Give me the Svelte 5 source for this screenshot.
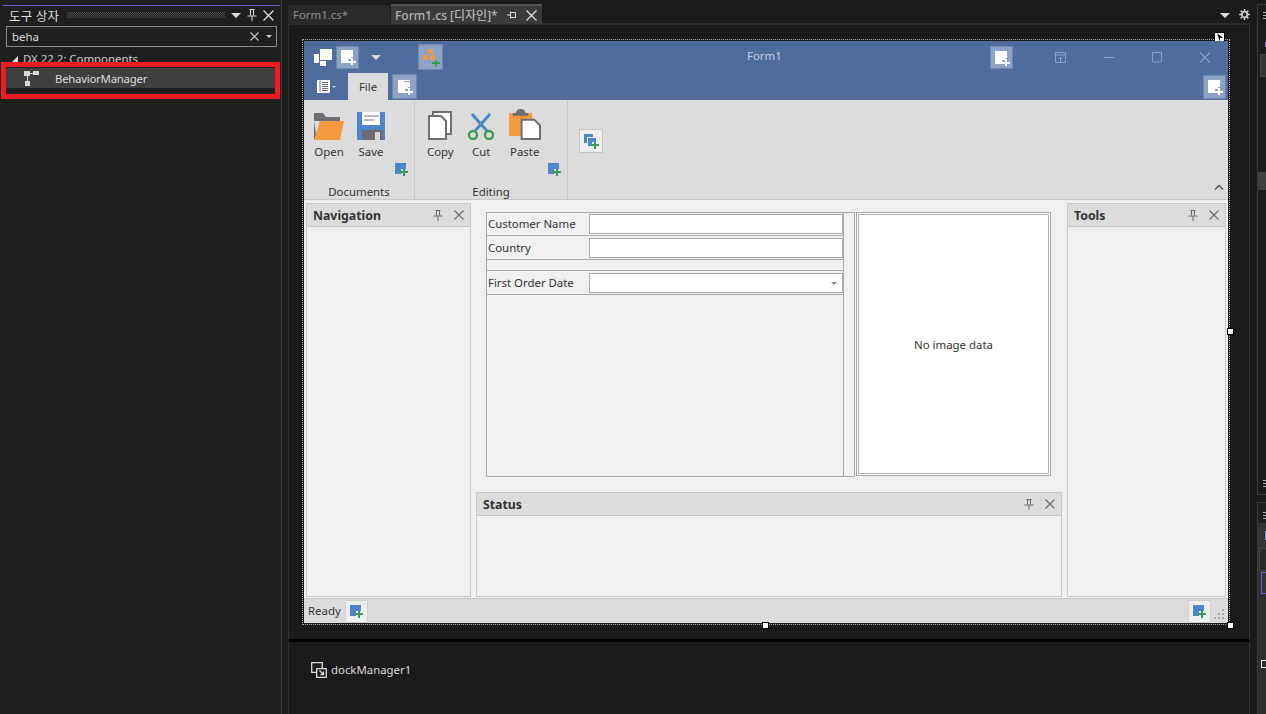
<script lang="ts">
	const groups = [
		{ label: "Documents", width: 111, items: ["Open", "Save"] },
		{ label: "Editing", width: 153, items: ["Copy", "Cut", "Paste"] }
	];
	const rows = [
		{ label: "Customer Name", combo: false },
		{ label: "Country", combo: false },
		{ gap: true },
		{ label: "First Order Date", combo: true }
	];
</script>

{#snippet addWhite()}
	<svg width="16" height="16" viewBox="0 0 16 16"><path d="M1 1H13V8H11V10H8V14H1Z" fill="#fff"/><path d="M11 9h2v3h3v2h-3v2h-2v-2H8v-2h3Z" fill="#fff"/></svg>
{/snippet}
{#snippet addTab()}
	<svg width="16" height="16" viewBox="0 0 16 16"><path d="M1 1H7V3H13V8H11V10H8V14H1Z" fill="#fff"/><path d="M7 1h6v1H7Z" fill="#fff"/><path d="M11 9h2v3h3v2h-3v2h-2v-2H8v-2h3Z" fill="#fff"/></svg>
{/snippet}
{#snippet addBlue()}
	<svg width="13" height="13" viewBox="0 0 13 13"><path d="M0 0H11V6H6V11H0Z" fill="#4d87c9"/><path d="M8 6h2v2h3v2h-3v3H8v-3H5V8h3Z" fill="#3a9a52"/></svg>
{/snippet}
{#snippet pin()}
	<svg width="10" height="11" viewBox="0 0 10 11" fill="none" stroke="#6a6a6a"><path d="M2.500.5h5M3.500.5v5M6.500.5v5M.5 6h9M5 6v5"/></svg>
{/snippet}
{#snippet cross()}
	<svg width="10" height="10" viewBox="0 0 10 10" fill="none" stroke="#6a6a6a" stroke-width="1.100"><path d="M.5.5l9 9M9.500.5l-9 9"/></svg>
{/snippet}
{#snippet ribbonIcon(name)}
	{#if name === "Open"}
		<svg width="30" height="27" viewBox="0 0 30 27"><path d="M0 0H9L12 4H26V8H0Z" fill="#6d6d73"/><path d="M0 8V27H3Z" fill="#6d6d73"/><path d="M6 8H30L26 27H0Z" fill="#f39a3e"/></svg>
	{:else if name === "Save"}
		<svg width="28" height="28" viewBox="0 0 28 28"><path d="M0 0H28V28H0Z" fill="#4d87c9"/><path d="M5 0H23V13H5Z" fill="#fff"/><path d="M7 3H22V5H7ZM7 7H17V9H7Z" fill="#b9b9b9"/><path d="M5 18H26V28H5Z" fill="#6d6d73"/><path d="M18 20H23V28H18Z" fill="#d4d4d4"/></svg>
	{:else if name === "Copy"}
		<svg width="24" height="29" viewBox="0 0 24 29"><path d="M5 1H23V23H5Z" fill="#fff" stroke="#6d6d73" stroke-width="2"/><path d="M1 5H13L18 10V28H1Z" fill="#fff" stroke="#6d6d73" stroke-width="2"/></svg>
	{:else if name === "Cut"}
		<svg width="28" height="27" viewBox="0 0 28 27" fill="none"><path d="M5 1L20 18M23 1L8 18" stroke="#4d87c9" stroke-width="3"/><circle cx="6" cy="22" r="4" stroke="#3a9a52" stroke-width="2.300"/><circle cx="22" cy="22" r="4" stroke="#3a9a52" stroke-width="2.300"/></svg>
	{:else}
		<svg width="32" height="31" viewBox="0 0 33 32"><path d="M0 4H24V28H0Z" fill="#f39a3e"/><path d="M7 4C8 1 9 0 12 0S16 1 17 4H20V7H4V4Z" fill="#6d6d73"/><path d="M13 11H26L32 17V31H13Z" fill="#fff" stroke="#6d6d73" stroke-width="2"/></svg>
	{/if}
{/snippet}
{#snippet dockHeader(title)}
	<div class="dock-head">
		<span>{title}</span>
		<i class="pin">{@render pin()}</i>
		{@render cross()}
	</div>
{/snippet}

<div class="ide">
	<aside class="toolbox">
		<div class="tb-head">
			<span class="tb-title">도구 상자</span>
			<span class="grip"></span>
			<span class="tri light"></span>
			<svg width="10" height="12" viewBox="0 0 10 12" fill="none" stroke="#ddd"><path d="M2.500.5h5M3.500.5v6M6.500.5v6M.5 7h9M5 7v5"/></svg>
			<svg width="11" height="11" viewBox="0 0 11 11" fill="none" stroke="#ddd" stroke-width="1.300"><path d="M.5.5l10 10M10.500.5l-10 10"/></svg>
		</div>
		<div class="tb-search">
			<span>beha</span>
			<svg width="9" height="9" viewBox="0 0 9 9" fill="none" stroke="#ccc" stroke-width="1.200"><path d="M.5.5l8 8M8.500.5l-8 8"/></svg>
			<span class="tri small"></span>
		</div>
		<div class="tb-group"><span class="corner"></span>DX 22.2: Components</div>
		<div class="tb-item">
			<svg width="15" height="15" viewBox="0 0 15 15"><path d="M0 0H6V5H0ZM9 0H15V4H9ZM1 10H6V15H1Z" fill="#d8d8d8"/><path d="M6 2H9V3H6ZM3 5H4V10H3Z" fill="#d8d8d8"/></svg>
			<span>BehaviorManager</span>
		</div>
		<div class="highlight"></div>
	</aside>

	<main class="doc">
		<div class="tabs">
			<div class="tab">Form1.cs*</div>
			<div class="tab active">
				<span>Form1.cs [디자인]*</span>
				<svg width="10" height="9" viewBox="0 0 10 9" fill="none" stroke="#ddd"><path d="M3.500 1.500h5v5h-5zM3.500.5v7M0 4h3"/></svg>
				<svg width="11" height="11" viewBox="0 0 11 11" fill="none" stroke="#ddd" stroke-width="1.300"><path d="M.5.5l10 10M10.500.5l-10 10"/></svg>
			</div>
			<span class="tab-fill"></span>
			<span class="tri light"></span>
			<svg class="gear" width="11" height="11" viewBox="0 0 11 11" fill="none" stroke="#ccc"><circle cx="5.500" cy="5.500" r="2.800" stroke-width="1.800"/><path d="M5.500 0v11M0 5.500h11M1.600 1.600l7.800 7.800M9.400 1.600l-7.800 7.800" stroke-width="1.500" stroke-dasharray="2 7 2"/></svg>
		</div>

		<div class="canvas">
			<div class="selection">
				<span class="handle h-tag"><svg width="9" height="9" viewBox="0 0 9 9"><path d="M2 0L8 5H5V9Z" fill="#000"/></svg></span>
				<span class="handle h-right"></span>
				<span class="handle h-bottom"></span>
				<span class="handle h-corner"></span>

				<div class="form">
					<div class="titlebar">
						<svg class="qa-logo" width="18" height="17" viewBox="0 0 18 17"><path d="M6 0H18V11H6ZM0 5H5V14H0ZM6 12H12V17H6Z" fill="#fff"/></svg>
						<button class="add qa-add">{@render addWhite()}</button>
						<span class="tri light qa-drop"></span>
						<button class="add qa-org">
							<svg width="18" height="19" viewBox="0 0 18 19"><path d="M6 1h5v5H6ZM1 7h5v5H1ZM8 7h5v5H8Z" fill="#f39a3e"/><path d="M13 12h2v2h3v2h-3v3h-2v-3h-3v-2h3Z" fill="#3a9a52"/></svg>
						</button>
						<span class="form-title">Form1</span>
						<button class="add title-add">{@render addWhite()}</button>
						<div class="winbtns">
							<svg width="12" height="11" viewBox="0 0 12 11" fill="none" stroke="#8da2c5"><path d="M.5.5h10v10H.5zM.5 3h10M5.500 10V5M3.500 7l2-2 2 2"/></svg>
							<svg width="12" height="11" viewBox="0 0 12 11" fill="none" stroke="#8da2c5"><path d="M1 5.500h10"/></svg>
							<svg width="12" height="11" viewBox="0 0 12 11" fill="none" stroke="#8da2c5"><path d="M1.500.5h9v9.500h-9z"/></svg>
							<svg width="12" height="11" viewBox="0 0 12 11" fill="none" stroke="#8da2c5" stroke-width="1.100"><path d="M1 .5l10 10M11 .5l-10 10"/></svg>
						</div>
					</div>

					<div class="tabrow">
						<span class="menu-btn">
							<svg width="13" height="13" viewBox="0 0 13 13"><path d="M0 0H13V13H0Z" fill="#fff"/><path d="M3 1V12" stroke="#6d6d73"/><path d="M5 2.500h6M5 4.500h6M5 6.500h6M5 8.500h6M5 10.500h6" stroke="#6d6d73"/></svg>
							<span class="tiny-tri"></span>
						</span>
						<span class="file-tab">File</span>
						<button class="add tab-add">{@render addTab()}</button>
						<span class="tab-fill"></span>
						<button class="add end-add">{@render addWhite()}</button>
					</div>

					<div class="ribbon">
						{#each groups as group}
							<section class="rb-group" style={`width:${group.width}px`}>
								<div class="rb-items">
									{#each group.items as item}
										<div class="rb-item">
											<span class="rb-icon">{@render ribbonIcon(item)}</span>
											<span>{item}</span>
										</div>
									{/each}
									<span class="rb-mini">{@render addBlue()}</span>
								</div>
								<div class="rb-label">{group.label}</div>
							</section>
						{/each}
						<button class="rb-loose">
							<svg width="15" height="15" viewBox="0 0 15 15"><path d="M0 0H9V3H3V9H0Z" fill="#4d87c9"/><path d="M4 4H12V8H8V12H4Z" fill="#4d87c9"/><path d="M10 8h2v2h3v2h-3v3h-2v-3H7v-2h3Z" fill="#3a9a52"/></svg>
						</button>
						<svg class="rb-collapse" width="10" height="6" viewBox="0 0 10 6" fill="none" stroke="#555" stroke-width="1.500"><path d="M1 5.500L5 1.500l4 4"/></svg>
					</div>

					<div class="body">
						<div class="dock nav">{@render dockHeader("Navigation")}</div>

						<div class="center">
							<div class="layout-area">
								<div class="layout">
									{#each rows as row}
										{#if row.gap}
											<div class="lc-gap"></div>
										{:else}
											<div class="lc-row">
												<label>{row.label}</label>
												<div class="edit">
													{#if row.combo}<span class="tiny-tri gray"></span>{/if}
												</div>
											</div>
										{/if}
									{/each}
								</div>
								<div class="splitter"></div>
								<div class="picture"><div>No image data</div></div>
							</div>
							<div class="dock status">{@render dockHeader("Status")}</div>
						</div>

						<div class="dock tools">{@render dockHeader("Tools")}</div>
					</div>

					<div class="statusbar">
						<span class="ready">Ready</span>
						<span class="sb-add">{@render addBlue()}</span>
						<span class="tab-fill"></span>
						<span class="sb-add">{@render addBlue()}</span>
						<svg class="resize" width="11" height="11" viewBox="0 0 11 11" fill="#aaa"><path d="M9 0h2v2H9zM5 4h2v2H5zM9 4h2v2H9zM1 8h2v2H1zM5 8h2v2H5zM9 8h2v2H9z"/></svg>
					</div>
				</div>
			</div>
		</div>

		<div class="tray">
			<svg width="16" height="16" viewBox="0 0 16 16" fill="none" stroke="#ddd" stroke-width="1.300"><path d="M.7.7h10.600v9.600H.7z"/><path d="M5.700 6.700h9.600v8.600H5.700z" fill="#1b1b1b"/><path d="M8.500 8.500l4 4M9.500 12.500h3v-3"/></svg>
			<span>dockManager1</span>
		</div>
	</main>

	<div class="side">
		<div class="side-top">
			<span class="sd-lines t1"></span>
			<span class="sd-purple"></span>
			<span class="sd-box"></span>
			<span class="sd-thumb"></span>
			<span class="sd-lines t2"></span>
		</div>
		<div class="side-bottom">
			<span class="sd-lines t3"></span>
			<span class="sd-blue"></span>
			<span class="sd-box b2"></span>
			<span class="sd-pbox"></span>
			<span class="sd-plus"></span>
		</div>
	</div>
</div>

<style>
	:global(body) {
		margin: 0;
		background: #1b1b1b;
	}
	.ide {
		position: relative;
		display: flex;
		width: 1266px;
		height: 714px;
		overflow: hidden;
		font: 11.400px "Noto Sans", "Noto Sans CJK KR", sans-serif;
		color: #ddd;
	}
	button {
		padding: 0;
		font: inherit;
	}
	svg {
		display: block;
		flex: none;
	}
	.tab-fill {
		flex: 1;
	}
	.tri {
		display: block;
		width: 0;
		height: 0;
		border: 5px solid transparent;
		border-bottom: 0;
		border-top-color: #aaa;
	}
	.tri.light {
		border-top-color: #ddd;
	}
	.tri.small {
		border-width: 3px 3px 0;
		border-top-color: #ccc;
	}
	.tiny-tri {
		display: block;
		width: 0;
		height: 0;
		border: 2px solid transparent;
		border-bottom: 0;
		border-top-color: #c5d0e0;
	}
	.tiny-tri.gray {
		border-width: 3px 3px 0;
		border-top-color: #888;
	}

	/* toolbox */
	.toolbox {
		position: relative;
		box-sizing: border-box;
		width: 282px;
		flex: none;
		padding: 5px 1px 0 3px;
		background: #1f1f1f;
		border-right: 1px solid #333;
	}
	.tb-head {
		display: flex;
		align-items: center;
		gap: 6px;
		height: 18px;
		padding: 0 6px 0 6px;
		border-top: 1px solid #6a5fd0;
	}
	.tb-title {
		font-size: 12.500px;
		letter-spacing: 0.2px;
	}
	.grip {
		flex: 1;
		height: 6px;
		margin-left: 2px;
		background: conic-gradient(#4c4c4c 25%, transparent 0 50%, #4c4c4c 0 75%, transparent 0) 0 0 / 2px 2px;
	}
	.tb-search {
		display: flex;
		align-items: center;
		gap: 7px;
		height: 19px;
		margin: 2px 3px 0 3px;
		padding: 0 4px 0 5px;
		border: 1px solid #8a8a8a;
	}
	.tb-search span:first-child {
		flex: 1;
	}
	.tb-group {
		display: flex;
		align-items: center;
		height: 19px;
		margin-top: 2px;
		padding-left: 9px;
		color: #ccc;
	}
	.corner {
		width: 0;
		height: 0;
		margin-right: 5px;
		border-left: 6px solid transparent;
		border-bottom: 6px solid #ddd;
	}
	.tb-item {
		display: flex;
		align-items: center;
		gap: 16px;
		height: 20px;
		margin: 0 3px 0 3px;
		padding-left: 18px;
		background: #3f3f3f;
		letter-spacing: -0.25px;
	}
	.highlight {
		position: absolute;
		left: 1px;
		top: 62px;
		box-sizing: border-box;
		width: 279px;
		height: 37px;
		border: 5px solid #ed1c24;
	}

	/* document */
	.doc {
		display: flex;
		flex-direction: column;
		box-sizing: border-box;
		width: 969px;
		flex: none;
		margin-left: 6px;
	}
	.tabs {
		display: flex;
		align-items: flex-start;
		flex: none;
		box-sizing: border-box;
		height: 25px;
		margin-right: 7px;
		border-bottom: 2px solid #2d2d2d;
	}
	.tabs .tri {
		margin: 13px 9px 0 0;
	}
	.gear {
		margin-top: 9px;
	}
	.tab {
		display: flex;
		align-items: center;
		box-sizing: border-box;
		width: 102px;
		height: 19px;
		margin: 5px 1px 0 0;
		padding-left: 5px;
		background: #2a2a2a;
		color: #8f8f8f;
	}
	.tab.active {
		gap: 9px;
		width: 151px;
		height: 20px;
		margin-top: 4px;
		padding-left: 4px;
		border-top: 2px solid #555;
		background: #3a3a3a;
		color: #b4b4b4;
		font-size: 12px;
		font-weight: 500;
	}
	.canvas {
		flex: none;
		box-sizing: border-box;
		height: 617px;
		margin-right: 7px;
		padding: 14px 0 0 13px;
		border-left: 1px solid #333;
		border-right: 1px solid #333;
		border-bottom: 3px solid #000;
	}
	.selection {
		position: relative;
		box-sizing: border-box;
		width: 928px;
		height: 586px;
		padding: 1px;
		border: 1px dotted #aaa;
	}
	.handle {
		position: absolute;
		box-sizing: border-box;
		width: 7px;
		height: 7px;
		background: #fff;
		border: 1px solid #000;
	}
	.h-tag {
		display: grid;
		place-items: center;
		left: 911px;
		top: -8px;
		width: 11px;
		height: 11px;
	}
	.h-right {
		right: -5px;
		top: 288px;
	}
	.h-bottom {
		left: 459px;
		bottom: -5px;
	}
	.h-corner {
		right: -5px;
		bottom: -5px;
	}
	.form {
		display: flex;
		flex-direction: column;
		height: 100%;
		background: #f0f0f0;
		color: #333;
	}
	.add {
		display: grid;
		place-items: center;
		box-sizing: border-box;
		width: 23px;
		height: 23px;
		flex: none;
		background: #8da2c5;
		border: 1px solid #6f87b0;
	}
	.titlebar {
		position: relative;
		display: flex;
		align-items: center;
		flex: none;
		height: 32px;
		padding-left: 10px;
		background: #4e6c9c;
	}
	.qa-add {
		margin-left: 4px;
	}
	.qa-drop {
		margin-left: 12px;
	}
	.qa-org {
		width: 25px;
		height: 26px;
		margin-left: 37px;
	}
	.form-title {
		position: absolute;
		left: 443px;
		top: 7px;
		color: #c3cfe2;
	}
	.title-add {
		position: absolute;
		left: 686px;
		top: 5px;
	}
	.winbtns {
		position: absolute;
		right: 17px;
		top: 11px;
		display: flex;
		gap: 36px;
	}
	.tabrow {
		display: flex;
		align-items: stretch;
		flex: none;
		height: 27px;
		background: #4e6c9c;
	}
	.menu-btn {
		display: flex;
		align-items: center;
		gap: 2px;
		width: 44px;
		padding-left: 13px;
		box-sizing: border-box;
	}
	.file-tab {
		display: grid;
		place-items: center;
		width: 40px;
		background: #dcdcdc;
	}
	.tab-add {
		align-self: center;
		width: 25px;
		height: 25px;
		margin-left: 4px;
	}
	.end-add {
		align-self: center;
		height: 24px;
		margin-right: 2px;
	}
	.ribbon {
		position: relative;
		display: flex;
		flex: none;
		height: 100px;
		background: #dcdcdc;
		border-bottom: 1px solid #c8c8c8;
		box-sizing: border-box;
	}
	.rb-group {
		display: flex;
		flex-direction: column;
		box-sizing: border-box;
		padding: 8px 0 0 10px;
		border-right: 1px solid #c8c8c8;
	}
	.rb-group + .rb-group {
		padding-left: 12px;
	}
	.rb-items {
		position: relative;
		display: flex;
		gap: 13px;
		flex: 1;
	}
	.rb-group + .rb-group .rb-items {
		gap: 13.500px;
	}
	.rb-item {
		display: flex;
		flex-direction: column;
		align-items: center;
		line-height: 16px;
	}
	.rb-icon {
		display: flex;
		align-items: flex-end;
		height: 32px;
		margin-bottom: 4px;
	}
	.rb-mini {
		position: absolute;
		right: 6px;
		top: 55px;
	}
	.rb-label {
		height: 15px;
		margin-left: -10px;
		text-align: center;
	}
	.rb-group + .rb-group .rb-label {
		margin-left: -12px;
	}
	.rb-loose {
		display: grid;
		place-items: center;
		box-sizing: border-box;
		width: 24px;
		height: 24px;
		margin: 29px 0 0 11px;
		background: #eee;
		border: 1px solid #c4c4c4;
	}
	.rb-collapse {
		position: absolute;
		right: 4px;
		bottom: 9px;
	}
	.body {
		display: flex;
		flex: 1;
		gap: 5px;
		min-height: 0;
		padding: 3px 2px 1px;
		background: #f0f0f0;
	}
	.dock {
		box-sizing: border-box;
		border: 1px solid #c8c8c8;
	}
	.dock-head {
		display: flex;
		align-items: center;
		box-sizing: border-box;
		height: 23px;
		padding: 0 6px;
		background: #dcdcdc;
		border-bottom: 1px solid #c8c8c8;
		font-size: 12.300px;
		font-weight: 700;
	}
	.dock-head span {
		flex: 1;
	}
	.pin {
		margin-right: 11px;
	}
	.nav {
		width: 165px;
	}
	.tools {
		width: 159px;
	}
	.center {
		display: flex;
		flex-direction: column;
		width: 586px;
	}
	.layout-area {
		display: flex;
		flex: none;
		box-sizing: border-box;
		height: 289px;
		padding: 9px 0 15px 10px;
	}
	.layout {
		box-sizing: border-box;
		width: 358px;
		border: 1px solid #aaa;
	}
	.lc-row {
		display: flex;
		align-items: flex-end;
		box-sizing: border-box;
		height: 24px;
		padding: 0 0 1px 1px;
		border-bottom: 1px solid #aaa;
	}
	.lc-row:first-child {
		height: 23px;
	}
	.lc-row label {
		align-self: center;
		width: 101px;
	}
	.edit {
		display: flex;
		align-items: center;
		justify-content: flex-end;
		box-sizing: border-box;
		width: 254px;
		height: 20px;
		padding-right: 5px;
		background: #fff;
		border: 1px solid #aaa;
	}
	.lc-gap {
		height: 10px;
		border-bottom: 1px solid #aaa;
	}
	.splitter {
		box-sizing: border-box;
		width: 11px;
		border-top: 1px solid #aaa;
		border-bottom: 1px solid #aaa;
		border-right: 1px solid #aaa;
	}
	.picture {
		box-sizing: border-box;
		width: 195px;
		margin-left: 1px;
		padding-bottom: 1px;
	}
	.picture div {
		display: grid;
		place-items: center;
		box-sizing: border-box;
		height: 100%;
		background: #fff;
		border: 1px solid #aaa;
		box-shadow: inset 0 0 0 1px #fff, inset 0 0 0 2px #b4b4b4;
	}
	.status {
		flex: 1;
	}
	.statusbar {
		display: flex;
		align-items: center;
		flex: none;
		height: 25px;
		box-sizing: border-box;
		padding-left: 4px;
		background: #dcdcdc;
		border-top: 1px solid #c8c8c8;
	}
	.ready {
		width: 37px;
		margin-top: -1px;
	}
	.sb-add {
		display: grid;
		place-items: center;
		box-sizing: border-box;
		width: 23px;
		height: 23px;
		background: #eee;
		border: 1px solid #d0d0d0;
	}
	.resize {
		margin: 6px 4px 0 2px;
	}

	/* tray */
	.tray {
		display: flex;
		align-items: center;
		gap: 4px;
		flex: 1;
		margin-right: 7px;
		padding: 0 0 17px 22px;
		border-left: 1px solid #333;
		border-right: 1px solid #333;
		color: #d8d8d8;
	}

	/* docked windows on the right, cut by the window edge */
	.side {
		position: absolute;
		left: 1257px;
		top: 4px;
		bottom: 0;
		width: 9px;
		display: flex;
		flex-direction: column;
		gap: 7px;
	}
	.side-top,
	.side-bottom {
		position: relative;
		box-sizing: border-box;
		border: 1px solid #3a3a3a;
		border-right: 0;
	}
	.side-top {
		height: 491px;
	}
	.side-bottom {
		flex: 1;
		background: linear-gradient(#1f1f1f 20px, #333 20px, #333 92px, #2d2d2d 92px);
		border-bottom: 0;
	}
	.side span {
		position: absolute;
	}
	.sd-lines {
		left: 5px;
		width: 4px;
		height: 8px;
		background: repeating-linear-gradient(#aab4c0 0 1px, transparent 1px 3px);
	}
	.t1 { top: 7px; }
	.t2 { top: 475px; }
	.t3 { top: 9px; }
	.sd-purple {
		left: 7px;
		top: 37px;
		width: 2px;
		height: 5px;
		background: #8a70d8;
	}
	.sd-box {
		left: 2px;
		top: 49px;
		width: 7px;
		height: 21px;
		background: #333;
		border: 1px solid #444;
		border-right: 0;
	}
	.sd-box.b2 {
		left: 1px;
		top: 45px;
		background: #2a2a2a;
	}
	.sd-thumb {
		left: 0;
		top: 167px;
		width: 9px;
		height: 18px;
		background: #3f3f3f;
	}
	.sd-blue {
		left: 7px;
		top: 28px;
		width: 2px;
		height: 9px;
		background: #7a9cf0;
	}
	.sd-pbox {
		left: 3px;
		top: 69px;
		width: 6px;
		height: 20px;
		border: 1px solid #6a5fd0;
		border-right: 0;
	}
	.sd-plus {
		left: 3px;
		top: 157px;
		width: 6px;
		height: 6px;
		border: 1px solid #eee;
		border-right: 0;
	}
</style>
